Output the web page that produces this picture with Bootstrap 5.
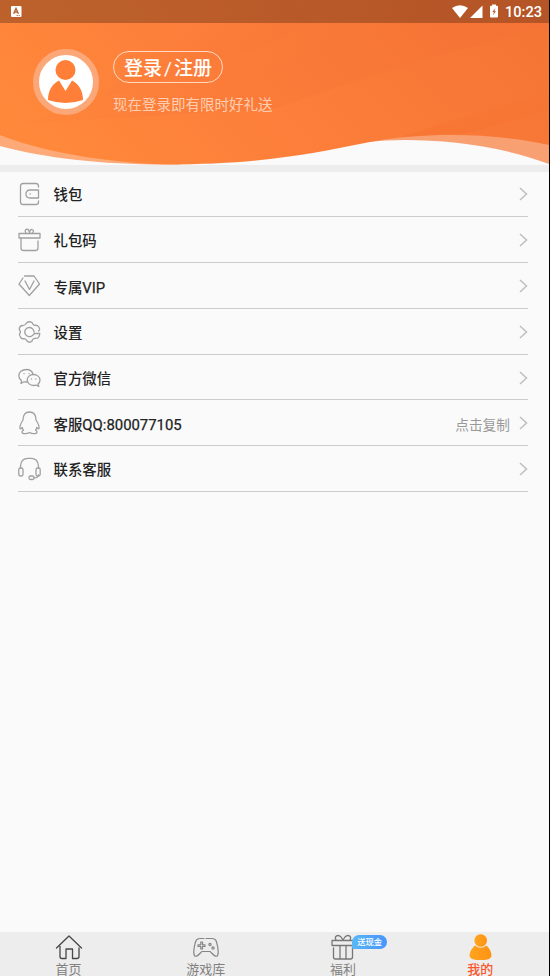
<!DOCTYPE html>
<html lang="zh-CN">
<head>
    <meta charset="UTF-8">
    <meta name="viewport" content="width=device-width, initial-scale=1.0">
    <title>我的</title>
    <link href="https://cdn.jsdelivr.net/npm/bootstrap@5.3.0/dist/css/bootstrap.min.css" rel="stylesheet">
    <style>
        body {
            font-family: Roboto, "Noto Sans CJK SC", sans-serif;
            background: #000;
            overflow: hidden;
        }
        .app {
            width: 549px;
            height: 976px;
            background: #fafafa;
        }
        .hero { height: 165px; }
        .hero-bg { z-index: 0; }
        .status-bar {
            height: 23px;
            padding: 0 7px 0 11px;
            background: rgba(0, 0, 0, .26);
            font-size: 14.6px;
            line-height: 23px;
        }
        .status-bar .clock { margin-left: 6px; padding-top: 2px; font-weight: 500; }
        .profile { padding: 26.4px 0 0 33px; }
        .avatar {
            width: 66px;
            height: 66px;
            border: 6px solid #fca777;
        }
        .profile-text { margin-left: 14px; }
        .login-btn {
            width: 110px;
            height: 32px;
            margin-top: 1.6px;
            border: 1px solid rgba(255, 255, 255, .7);
            font-size: 19px;
            font-weight: 500;
            line-height: 33px;
        }
        .login-btn .slash { margin: 0 2px; font-weight: 400; }
        .login-tip {
            margin-top: 12px;
            font-size: 14.5px;
            line-height: 22px;
            color: #ffceb2;
        }
        .band { height: 7px; background: #ededed; }
        .menu { margin: -.4px 21px 0 18px; }
        .menu-item {
            height: 45.77px;
            padding-top: 1px;
            border-bottom: 1px solid #ccc;
            font-size: 14.4px;
            line-height: 20px;
            color: #222;
        }
        .menu-item .label { margin-left: 12.5px; padding-top: 4px; font-weight: 500; }
        .menu-item .latin { font-size: 14.9px; font-weight: 400; -webkit-text-stroke: .25px #222; }
        .menu-item .hint { color: #999; font-size: 13.7px; margin-right: 9px; padding-top: 3px; }
        .line-icon { fill: none; stroke: #a0a0a0; stroke-width: 1.3; stroke-linecap: round; stroke-linejoin: round; }
        .arrow { fill: none; stroke: #bebebe; stroke-width: 1.5; }
        .tabbar { height: 44px; background: #ededed; font-size: 13px; line-height: 13px; color: #808080; }
        .tab { padding-top: 2px; }
        .tab svg { display: block; flex-shrink: 0; }
        .tab .tab-name { margin-top: 3px; white-space: nowrap; }
        .tab-on { color: #f9562b; }
        .tab-on .tab-name { font-weight: 500; }
        .gift-tag {
            left: 21px;
            top: 1px;
            width: 35px;
            height: 14px;
            border-radius: 7px 7px 7px 2px;
            background: linear-gradient(90deg, #58b8f8, #4795fb);
            font-size: 8.3px;
            font-weight: 500;
            line-height: 15px;
        }
    </style>
</head>
<body>
    <div class="app d-flex flex-column">
        <header class="hero position-relative">
            <svg class="hero-bg position-absolute top-0 start-0" width="549" height="165" viewBox="0 0 549 165">
                <defs>
                    <linearGradient id="base" x1="0" y1="0.6" x2="1" y2="0.3">
                        <stop offset="0" stop-color="#ff883b"/>
                        <stop offset=".4" stop-color="#fd7f3a"/>
                        <stop offset="1" stop-color="#f57535"/>
                    </linearGradient>
                    <linearGradient id="shade" gradientUnits="userSpaceOnUse" x1="200" y1="20" x2="230" y2="90">
                        <stop offset="0" stop-color="#f26c35" stop-opacity="0"/>
                        <stop offset="1" stop-color="#f26c35" stop-opacity=".5"/>
                    </linearGradient>
                    <linearGradient id="corner" x1="0" y1="0" x2="0" y2="1">
                        <stop offset="0" stop-color="#f56c29" stop-opacity="0"/>
                        <stop offset="1" stop-color="#f56c29" stop-opacity=".65"/>
                    </linearGradient>
                    <clipPath id="wave">
                        <path d="M0 0H549V145C500 134 430 131 370 142C310 150 260 164.500 165 164.500C100 164.500 30 148 0 135Z"/>
                    </clipPath>
                </defs>
                <path fill="#fdaa78" d="M0 130H180V165H0Z"/>
                <path fill="#f9a073" d="M350 130H549V165H350Z"/>
                <path fill="#fafafa" d="M0 146C45 158 100 164.500 165 164.500C290 164.500 330 140 405 140C450 140 500 146 549 164V165H0Z"/>
                <path fill="url(#base)" d="M0 0H549V145C500 134 430 131 370 142C310 154 260 164.500 165 164.500C100 162 40 151 0 135Z"/>
                <g clip-path="url(#wave)">
                    <path fill="url(#shade)" d="M200 0H549V25L400 67L275 108L20 124L100 98L180 20Z" opacity=".35"/>
                    <path fill="url(#shade)" d="M165 0H290L315 23L250 50L175 75L95 100L130 45Z" opacity=".3"/>
                    <path fill="url(#corner)" d="M549 90V110L470 133L400 137Z" opacity=".5"/>
                </g>
            </svg>
            <div class="status-bar position-relative d-flex align-items-center text-white">
                <svg width="11" height="11" viewBox="0 0 11 11">
                    <rect width="10.500" height="11" rx="1" fill="#fff"/>
                    <path d="M2.700 7.800L5 2.500L7.400 7.800M3.500 6.100H6.600" fill="none" stroke="#b8602f" stroke-width="1.400"/>
                    <path d="M5.500 9.500H9.500" stroke="#b8602f" stroke-width=".7" stroke-dasharray="1.500 .5"/>
                </svg>
                <svg class="ms-auto" width="47" height="15" viewBox="0 0 47 15" fill="#fff">
                    <path d="M0 4Q8 -1.500 16 4L8 14Z"/>
                    <path d="M30.500 1.500V14H18Z"/>
                    <path d="M40 .5h4v1.200h1q1 0 1 1V12.500q0 1-1 1h-6q-1 0-1-1V2.700q0-1 1-1h1z"/>
                    <path d="M43.500 4L40.300 8H42L40.800 11.500L44 7.300H42.300Z" fill="#b8562a"/>
                </svg>
                <span class="clock">10:23</span>
            </div>
            <div class="profile position-relative d-flex align-items-start">
                <div class="avatar rounded-circle bg-white">
                    <svg class="d-block" width="54" height="54" viewBox="0 0 54 54" fill="#ff7e38">
                        <circle cx="26.500" cy="15" r="10"/>
                        <path d="M20 25.500L26.500 36L33 25.500C40 29 44 36 44 45Q26.500 51 9 45C9 36 13 29 20 25.500Z"/>
                    </svg>
                </div>
                <div class="profile-text">
                    <div class="login-btn rounded-pill text-white text-center">登录<span class="slash">/</span>注册</div>
                    <div class="login-tip">现在登录即有限时好礼送</div>
                </div>
            </div>
        </header>
        <div class="band flex-shrink-0"></div>

        <main class="menu">
            <div class="menu-item d-flex align-items-center">
                <svg class="line-icon" width="23" height="24" viewBox="0 0 23 24">
                    <path d="M20.500 5V4Q20.500 1.500 18 1.500H5Q2.500 1.500 2.500 4V20Q2.500 22.500 5 22.500H18Q20.500 22.500 20.500 20V19"/>
                    <path d="M20.500 8H12Q8 8 8 12T12 16H20.500V8M12 12H12.200"/>
                </svg>
                <span class="label">钱包</span>
                <svg class="arrow ms-auto" width="9" height="14" viewBox="0 0 9 14"><path d="M1 1L7.500 7L1 13"/></svg>
            </div>
            <div class="menu-item d-flex align-items-center">
                <svg class="line-icon" width="23" height="24" viewBox="0 0 23 24">
                    <path d="M1 5.500H22V10H1ZM3 10V20Q3 22.500 5.500 22.500H17.500Q20 22.500 20 20V13"/>
                    <path d="M8 5.500Q6 1.500 9 1.200Q11 1.200 11.500 5Q12 1.200 14 1.500Q17 2.500 14 5.500"/>
                </svg>
                <span class="label">礼包码</span>
                <svg class="arrow ms-auto" width="9" height="14" viewBox="0 0 9 14"><path d="M1 1L7.500 7L1 13"/></svg>
            </div>
            <div class="menu-item d-flex align-items-center">
                <svg class="line-icon" width="23" height="24" viewBox="0 0 23 24">
                    <path d="M6.500 2H16L21.500 10L11.300 21.500L1 10L5 4"/>
                    <path d="M7 7L11.500 15.500L16 7"/>
                </svg>
                <span class="label">专属<span class="latin">VIP</span></span>
                <svg class="arrow ms-auto" width="9" height="14" viewBox="0 0 9 14"><path d="M1 1L7.500 7L1 13"/></svg>
            </div>
            <div class="menu-item d-flex align-items-center">
                <svg class="line-icon" width="23" height="24" viewBox="0 0 23 24">
                    <path d="M16 12A4.600 4.600 0 1 0 14.500 15.500L16.500 13.500H21.800Q21.500 17.500 19 18.200L16 18.500Q14.500 19 14 21Q11.500 23.500 9 21Q8 18.800 6 18.700Q3 19 2.500 17Q1 14.500 1.500 14Q3.500 12 1.200 9.500Q1.500 6 4 5.500Q7 6 8.500 3Q11 .8 14 2.500Q15 5 16.500 5.300Q19.500 5 20.500 6.500Q22 9 21.500 10L20.500 11"/>
                </svg>
                <span class="label">设置</span>
                <svg class="arrow ms-auto" width="9" height="14" viewBox="0 0 9 14"><path d="M1 1L7.500 7L1 13"/></svg>
            </div>
            <div class="menu-item d-flex align-items-center">
                <svg class="line-icon" width="23" height="24" viewBox="0 0 23 24">
                    <path d="M15 8C14 5 11.500 3.500 8.500 3.500C4 3.500 .8 6.200 .8 9.700C.8 12 2 13.500 3.500 14.500L3 17.500L6 15.800L9 16"/>
                    <path d="M15.500 8.500C12 8.500 9.200 11 9.200 14S12 19.500 15.500 19.500Q17 19.500 18 19L20.800 20.500L20 18Q22 16.500 22 14C22 11 19 8.500 15.500 8.500Z"/>
                    <path d="M6 7.700H6.100M11 7.700H11.100M13.500 13H13.600M17.800 13H17.900"/>
                </svg>
                <span class="label">官方微信</span>
                <svg class="arrow ms-auto" width="9" height="14" viewBox="0 0 9 14"><path d="M1 1L7.500 7L1 13"/></svg>
            </div>
            <div class="menu-item d-flex align-items-center">
                <svg class="line-icon" width="23" height="24" viewBox="0 0 23 24">
                    <path d="M11.500 1C7 1 5 4 5 9C3 12 1.500 14.500 2 17.500Q2.500 18.500 4.300 16.500Q4.500 18 5.500 19.200C3.500 20 3.500 22 5.500 22.500Q9 23 11.500 21.500Q14 23 17.500 22.500C19.500 22 19.500 20 17.500 19.200Q18.500 18 18.700 16.500Q20.500 18.500 21 17.500C21.500 14.500 20 12 18 9C18 4 16 1 11.500 1Z"/>
                </svg>
                <span class="label">客服<span class="latin">QQ:800077105</span></span>
                <span class="hint ms-auto">点击复制</span>
                <svg class="arrow" width="9" height="14" viewBox="0 0 9 14"><path d="M1 1L7.500 7L1 13"/></svg>
            </div>
            <div class="menu-item d-flex align-items-center">
                <svg class="line-icon" width="23" height="24" viewBox="0 0 23 24">
                    <path d="M2.500 11V9Q3 1.300 10 1.300H13Q20 1.300 20.500 9V11M20.500 18Q20 21 16 21"/>
                    <rect x=".8" y="11" width="4.200" height="8" rx="1.800"/>
                    <rect x="18" y="11" width="4.200" height="8" rx="1.800"/>
                    <rect x="11" y="19" width="5" height="3.500" rx="1.500"/>
                </svg>
                <span class="label">联系客服</span>
                <svg class="arrow ms-auto" width="9" height="14" viewBox="0 0 9 14"><path d="M1 1L7.500 7L1 13"/></svg>
            </div>
        </main>

        <nav class="tabbar mt-auto d-flex flex-shrink-0">
            <div class="tab col-3 d-flex flex-column align-items-center">
                <svg width="28" height="26" viewBox="0 0 28 26" fill="none" stroke="#484848" stroke-width="1.300" stroke-linecap="round" stroke-linejoin="round">
                    <path d="M1.500 14L14 2L26.500 14M5 12.500V22.500Q5 24.500 7 24.500H11V15H17.500V24.500H22Q24 24.500 24 22.500V14"/>
                </svg>
                <span class="tab-name">首页</span>
            </div>
            <div class="tab col-3 d-flex flex-column align-items-center">
                <svg width="28" height="26" viewBox="0 0 28 26" fill="none" stroke="#858585" stroke-width="1.200" stroke-linecap="round" stroke-linejoin="round">
                    <path d="M12 4.500H8C4 4.500 3.500 7 2.500 12C1.500 17 1 20 2.800 22C5 23.500 8 19 10 17.500H18C20 19 23 23.500 25.200 22C27 20 26.500 17 25.500 12C24.500 7 24 4.500 20 4.500H14"/>
                    <path d="M8.800 8H10.500V10.800H13V12.500H10.500V15H8.800V12.500H6V10.800H8.800Z"/>
                    <circle cx="18" cy="10.500" r="1.100"/><circle cx="21" cy="14" r="1.100"/>
                </svg>
                <span class="tab-name">游戏库</span>
            </div>
            <div class="tab col-3 d-flex flex-column align-items-center">
                <div class="position-relative">
                    <svg width="24" height="26" viewBox="0 0 24 26" fill="none" stroke="#777" stroke-width="1.300" stroke-linecap="round" stroke-linejoin="round">
                        <path d="M1 6.500H23V11.500H1ZM2.500 14V23Q2.500 25 4.500 25H19.500Q21.500 25 21.500 23V11.500M9 11.500V25M15 11.500V25"/>
                        <path d="M5 6C3 2 7 0 10 3L12 6L14 3C17 0 21 2 19 6"/>
                    </svg>
                    <span class="gift-tag position-absolute text-white text-center">送现金</span>
                </div>
                <span class="tab-name">福利</span>
            </div>
            <div class="tab tab-on col-3 d-flex flex-column align-items-center">
                <svg width="24" height="26" viewBox="0 0 24 26">
                    <defs>
                        <linearGradient id="me"><stop stop-color="#ffa51f"/><stop offset="1" stop-color="#ff9212"/></linearGradient>
                    </defs>
                    <g fill="url(#me)">
                        <circle cx="12.700" cy="6.500" r="6.300"/>
                        <path d="M7 11.500Q12.700 16 18.500 11.500C21.500 14 23.500 18 23.500 22Q22.500 26.200 12.500 26.200T1.500 22C1.500 18 4 14 7 11.500Z"/>
                    </g>
                </svg>
                <span class="tab-name">我的</span>
            </div>
        </nav>
    </div>
    <script src="https://cdn.jsdelivr.net/npm/bootstrap@5.3.0/dist/js/bootstrap.bundle.min.js"></script>
</body>
</html>
